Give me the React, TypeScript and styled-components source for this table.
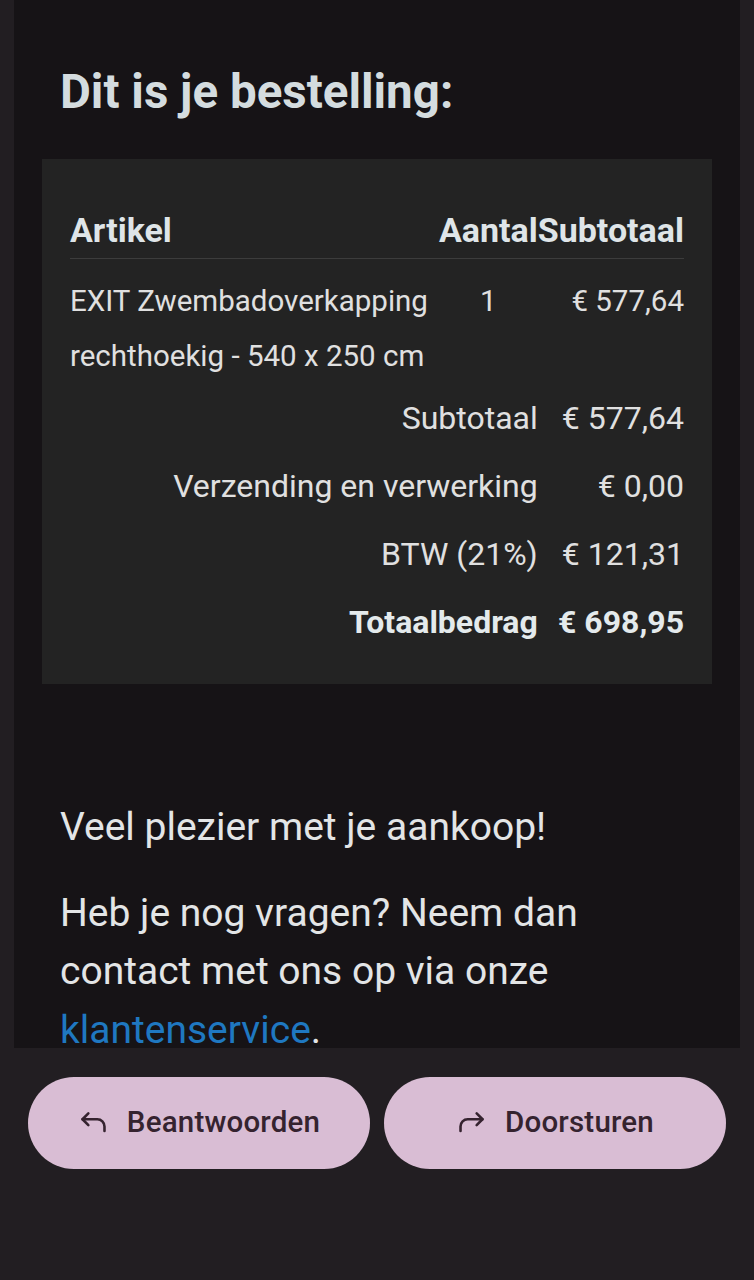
import React from 'react'
import styled, { createGlobalStyle } from 'styled-components';

const GlobalStyle = createGlobalStyle`
    html, body {
        margin: 0;
        padding: 0;
        background: #221e22;
    }
    body {
        font-family: Roboto, "Noto Sans", "Liberation Sans", sans-serif;
    }
`;

const Screen = styled.div`
    width: 754px;
    height: 1280px;
    display: flex;
    flex-direction: column;
    background: #221e22;
    overflow: hidden;
`;

const ScrollArea = styled.div`
    height: 1048px;
    flex-shrink: 0;
    padding: 0 14px;
    overflow: hidden;
`;

const Mail = styled.div`
    background: #161316;
    padding: 63px 0 40px;
    min-height: 100%;
`;

const Heading = styled.h1`
    margin: 0 0 38px;
    padding: 0 46px;
    font-size: 47.5px;
    line-height: 58px;
    font-weight: 700;
    color: #d4dcdf;
`;

const Card = styled.div`
    margin: 0 28px;
    background: #232323;
    padding: 44px 28px 28px;
`;

const Table = styled.table`
    width: 100%;
    border-collapse: collapse;
    font-size: 29.5px;
    line-height: 55px;
    color: #e0e0e0;
    th {
        font-size: 34px;
        font-weight: 700;
        color: #dfe5e8;
        padding: 0;
        border-bottom: 1px solid #3c3c3c;
        white-space: nowrap;
    }
    td {
        padding: 0;
        vertical-align: top;
    }
`;

const HeadCell = styled.th<{ align: 'left' | 'center' | 'right'; grow?: boolean }>`
    text-align: ${(p) => p.align};
    width: ${(p) => (p.grow ? '100%' : 'auto')};
`;

const ItemRow = styled.tr`
    td {
        padding-top: 15px;
    }
`;

const ItemName = styled.td`
    text-align: left;
`;

const Qty = styled.td`
    text-align: center;
`;

const Amount = styled.td`
    text-align: right;
    white-space: nowrap;
`;

const SumRow = styled.tr<{ strong?: boolean }>`
    td {
        padding: 6.5px 0;
        font-size: 32px;
        text-align: right;
        font-weight: ${(p) => (p.strong ? 700 : 400)};
        color: ${(p) => (p.strong ? '#e4eaec' : '#e0e0e0')};
        white-space: nowrap;
    }
`;

const Paragraph = styled.p`
    margin: 0 0 27px;
    padding: 0 46px;
    font-size: 39px;
    line-height: 58.5px;
    color: #e3e5e6;
`;

const Farewell = styled(Paragraph)`
    margin-top: 114px;
`;

const Link = styled.a`
    color: #1f78c1;
    text-decoration: none;
`;

const ActionBar = styled.div`
    display: flex;
    gap: 14px;
    padding: 29px 28px 0;
`;

const ActionButton = styled.button`
    flex: 1;
    height: 92px;
    border: none;
    border-radius: 46px;
    background: #d9bdd4;
    color: #35232f;
    display: flex;
    align-items: center;
    justify-content: center;
    gap: 18px;
    font-family: Roboto, "Noto Sans", sans-serif;
    font-size: 29.5px;
    font-weight: 500;
    letter-spacing: 0.2px;
    padding: 0 0 2px;
    svg {
        width: 31px;
        height: 31px;
        flex-shrink: 0;
    }
`;

const ReplyIcon = () => (
    <svg viewBox="0 0 24 24" fill="none" stroke="currentColor" strokeWidth="2" strokeLinecap="round" strokeLinejoin="round">
        <path d="M8 5 L3.5 9.5 L8 14" />
        <path d="M3.5 9.5 H15 a5.5 5.5 0 0 1 5.5 5.5 V18.5" />
    </svg>
);

const ForwardIcon = () => (
    <svg viewBox="0 0 24 24" fill="none" stroke="currentColor" strokeWidth="2" strokeLinecap="round" strokeLinejoin="round">
        <path d="M16 5 L20.5 9.5 L16 14" />
        <path d="M20.5 9.5 H9 a5.5 5.5 0 0 0 -5.5 5.5 V18.5" />
    </svg>
);

const summary = [
    { label: 'Subtotaal', value: '€ 577,64' },
    { label: 'Verzending en verwerking', value: '€ 0,00' },
    { label: 'BTW (21%)', value: '€ 121,31' },
    { label: 'Totaalbedrag', value: '€ 698,95', strong: true },
];

const App: React.FC = () => {
    return (
        <Screen>
            <GlobalStyle />
            <ScrollArea>
                <Mail>
                    <Heading>Dit is je bestelling:</Heading>
                    <Card>
                        <Table>
                            <thead>
                                <tr>
                                    <HeadCell align='left' grow>Artikel</HeadCell>
                                    <HeadCell align='center'>Aantal</HeadCell>
                                    <HeadCell align='right'>Subtotaal</HeadCell>
                                </tr>
                            </thead>
                            <tbody>
                                <ItemRow>
                                    <ItemName>EXIT Zwembadoverkapping rechthoekig - 540 x 250 cm</ItemName>
                                    <Qty>1</Qty>
                                    <Amount>€ 577,64</Amount>
                                </ItemRow>
                                {summary.map((row) => (
                                    <SumRow key={row.label} strong={row.strong}>
                                        <td colSpan={2}>{row.label}</td>
                                        <td>{row.value}</td>
                                    </SumRow>
                                ))}
                            </tbody>
                        </Table>
                    </Card>
                    <Farewell>Veel plezier met je aankoop!</Farewell>
                    <Paragraph>
                        Heb je nog vragen? Neem dan contact met ons op via onze <Link href='#'>klantenservice</Link>.
                    </Paragraph>
                </Mail>
            </ScrollArea>
            <ActionBar>
                <ActionButton>
                    <ReplyIcon />
                    Beantwoorden
                </ActionButton>
                <ActionButton>
                    <ForwardIcon />
                    Doorsturen
                </ActionButton>
            </ActionBar>
        </Screen>
    )
}

export default App;
